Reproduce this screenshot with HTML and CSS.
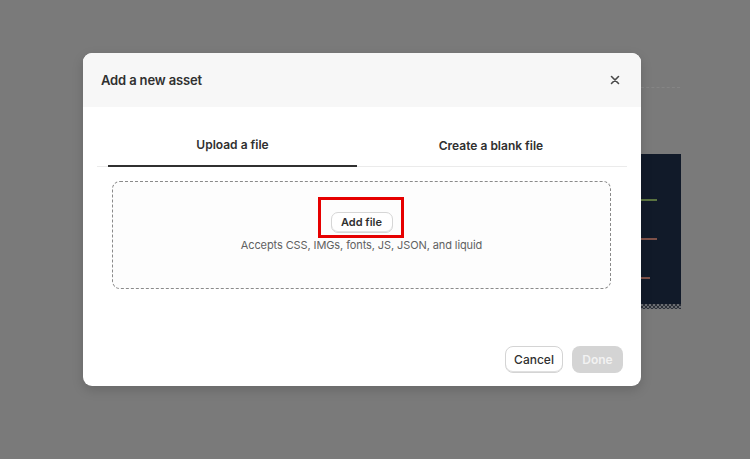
FILE: index.html
```html
<!DOCTYPE html>
<html>
<head>
<meta charset="utf-8">
<link rel="stylesheet" href="styles.css">
</head>
<body>
<div class="backdrop">
  <div class="bg-rule"></div>
  <div class="bg-code">
    <span class="ln ln-green"></span>
    <span class="ln ln-red"></span>
    <span class="ln ln-red2"></span>
    <div class="checker"></div>
  </div>
</div>
<div class="modal">
  <div class="modal-header">
    <h2 class="modal-title">Add a new asset</h2>
    <button class="close-btn" aria-label="Close">
      <svg width="10" height="10" viewBox="0 0 10 10"><path d="M1.5 1.5L8.5 8.5M8.5 1.5L1.5 8.5" stroke="#4a4a4a" stroke-width="1.6" stroke-linecap="round"/></svg>
    </button>
  </div>
  <div class="modal-body">
    <div class="tabs">
      <div class="tab tab-active">Upload a file</div>
      <div class="tab">Create a blank file</div>
    </div>
    <div class="dropzone">
      <div class="add-wrap">
        <button class="add-btn">Add file</button>
        <div class="highlight"></div>
      </div>
      <div class="accepts">Accepts CSS, IMGs, fonts, JS, JSON, and liquid</div>
    </div>
  </div>
  <div class="modal-footer">
    <button class="btn btn-cancel">Cancel</button>
    <button class="btn btn-done">Done</button>
  </div>
</div>
</body>
</html>
```

FILE: styles.css
```css
* { box-sizing: border-box; }
html, body { margin: 0; padding: 0; }
body {
  width: 750px;
  height: 459px;
  background: #7a7a7a;
  font-family: Inter, "Noto Sans", "Liberation Sans", sans-serif;
  position: relative;
  overflow: hidden;
}
.backdrop { position: absolute; inset: 0; }
.bg-rule {
  position: absolute;
  left: 600px; top: 87px; width: 80px; height: 0;
  border-top: 1px dashed #858585;
}
.bg-code {
  position: absolute;
  left: 600px; top: 154px; width: 81px; height: 155px;
  background: #111a29;
}
.ln { position: absolute; height: 2px; left: 41px; }
.ln-green { top: 45px; width: 16px; background: #5a7340; }
.ln-red { top: 84px; width: 16px; background: #7e5149; }
.ln-red2 { top: 123px; width: 9px; background: #7e5149; }
.checker {
  position: absolute; left: 41px; right: 0; bottom: 0; height: 5px;
  background-image: linear-gradient(45deg, #2c3038 25%, transparent 25%, transparent 75%, #2c3038 75%), linear-gradient(45deg, #2c3038 25%, transparent 25%, transparent 75%, #2c3038 75%);
  background-color: #6a6d72;
  background-size: 4px 4px;
  background-position: 0 0, 2px 2px;
}
.modal {
  position: absolute;
  left: 83px; top: 53px;
  width: 558px; height: 333px;
  background: #fff;
  border-radius: 9px;
  overflow: hidden;
  box-shadow: 0 4px 12px rgba(0,0,0,0.15);
  display: flex;
  flex-direction: column;
}
.modal-header {
  height: 54px;
  background: #f7f7f7;
  display: flex;
  align-items: center;
  justify-content: space-between;
  padding: 0 21px 0 18px;
}
.modal-title {
  margin: 0;
  font-size: 13px;
  font-weight: 600;
  color: #303030;
  letter-spacing: -0.15px;
}
.close-btn {
  border: 0; background: transparent; padding: 0;
  width: 10px; height: 10px; display: flex;
}
.modal-body { flex: 1; padding: 16px 14px 0 14px; }
.tabs {
  display: grid;
  grid-template-columns: 249px 268px;
  padding-left: 11px;
  height: 44px;
  border-bottom: 1px solid #ebebeb;
}
.tab {
  display: flex; align-items: center; justify-content: center;
  font-size: 12px; font-weight: 600; color: #303030;
  padding-top: 1px;
}
.tab-active { border-bottom: 2px solid #303030; margin-bottom: -1px; }
.dropzone {
  margin: 14px 16px 0 15px;
  height: 108px;
  border: 1px dashed #8a8a8a;
  border-radius: 8px;
  background: #fdfdfd;
  display: flex;
  flex-direction: column;
  align-items: center;
  padding-top: 28px;
}
.add-wrap { position: relative; }
.add-btn {
  height: 21px; width: 62px;
  border: 1px solid #d6d6d6;
  border-radius: 7px;
  background: #fff;
  font-family: inherit;
  font-size: 11px; font-weight: 600; color: #303030;
  padding: 0;
  box-shadow: inset 0 -1px 0 #e3e3e3;
}
.highlight {
  position: absolute;
  left: -13px; top: -13px; width: 86px; height: 41px;
  border: 3px solid #e60000;
}
.accepts {
  margin-top: 5px;
  font-size: 11px; color: #616161;
  letter-spacing: -0.1px;
}
.modal-footer {
  display: flex; justify-content: flex-end; gap: 9px;
  padding: 0 18px 13px 0;
}
.btn {
  height: 27px; border-radius: 8px;
  font-family: inherit; font-size: 12px; font-weight: 600;
  padding: 0;
}
.btn-cancel {
  width: 58px; background: #fff; color: #303030;
  font-weight: 500;
  border: 1px solid #d4d4d4;
  box-shadow: inset 0 -1px 0 #e0e0e0;
}
.btn-done {
  width: 51px; background: #d4d4d4; color: #f2f2f2; border: 0;
}
```
